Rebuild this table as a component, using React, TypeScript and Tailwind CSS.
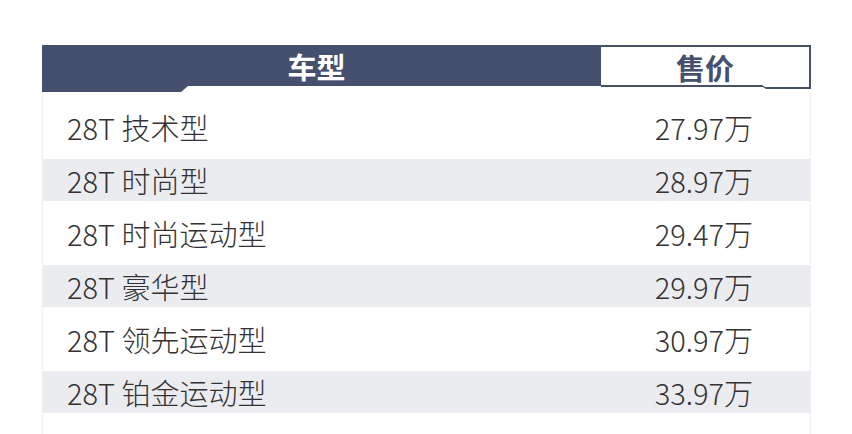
const rows = [
  { name: "28T 技术型", price: "27.97万" },
  { name: "28T 时尚型", price: "28.97万" },
  { name: "28T 时尚运动型", price: "29.47万" },
  { name: "28T 豪华型", price: "29.97万" },
  { name: "28T 领先运动型", price: "30.97万" },
  { name: "28T 铂金运动型", price: "33.97万" },
];

export default function App() {
  return (
    <div className="w-[852px] h-[434px] overflow-hidden bg-white pt-[45px] pl-[42px] font-['Noto_Sans_CJK_SC','Noto_Sans',sans-serif]">
      <div className="w-[769px]">
        {/* header */}
        <div className="flex h-[48px] items-start">
          <div className="w-[559px] h-[48px] bg-[#44506e] [clip-path:polygon(0_0,100%_0,100%_41px,146px_41px,139px_47px,0_47px)]">
            <div className="h-[42px] pr-[10px] flex items-center justify-center text-white font-bold text-[29px] leading-none">
              车型
            </div>
          </div>
          <div className="w-[210px] h-[44px] bg-[#44506e] [clip-path:polygon(0_0,100%_0,100%_44px,165px_44px,162px_42px,0_42px)]">
            <div className="mt-[2px] mr-[2px] h-[40px] bg-white flex items-center justify-center text-[#44506e] font-bold text-[29px] leading-none [clip-path:polygon(0_0,100%_0,100%_40px,164px_40px,161px_38px,0_38px)]">
              售价
            </div>
          </div>
        </div>
        {/* body */}
        <div className="border-x border-[#f0f0f2] pt-[13px] pb-[30px] flex flex-col gap-[11px]">
          {rows.map((r, i) => (
            <div
              key={i}
              className={`h-[42px] flex items-center justify-between pl-[24px] pr-[57px] text-[29px] font-light text-[#333333] leading-none ${
                i % 2 === 1 ? "bg-[#ebecf0]" : "bg-white"
              }`}
            >
              <span>{r.name}</span>
              <span>{r.price}</span>
            </div>
          ))}
        </div>
      </div>
    </div>
  );
}
